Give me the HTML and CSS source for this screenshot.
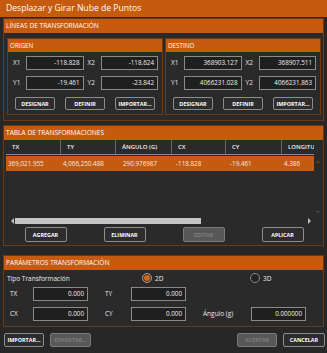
FILE: index.html
```html
<!DOCTYPE html>
<html lang="es">
<head>
    <meta charset="UTF-8">
    <meta name="viewport" content="width=device-width, initial-scale=1.0">
    <title>Desplazar y Girar Nube de Puntos</title>
    <link rel="stylesheet" href="styles.css">
</head>
<body>
    <div class="window">
        <div class="titlebar">Desplazar y Girar Nube de Puntos</div>

        <!-- Lineas de transformacion -->
        <div class="panel lines-panel">
            <div class="panel-head">LÍNEAS DE TRANSFORMACIÓN</div>
            <div class="groups">
                <div class="group">
                    <div class="group-head">ORIGEN</div>
                    <div class="coords">
                        <span class="lbl">X1</span><div class="field">-118.828</div>
                        <span class="lbl lbl2">X2</span><div class="field">-118.624</div>
                        <span class="lbl">Y1</span><div class="field">-19.461</div>
                        <span class="lbl lbl2">Y2</span><div class="field">-23.842</div>
                    </div>
                    <div class="group-buttons">
                        <button class="btn">DESIGNAR</button>
                        <button class="btn">DEFINIR</button>
                        <button class="btn">IMPORTAR...</button>
                    </div>
                </div>
                <div class="group">
                    <div class="group-head">DESTINO</div>
                    <div class="coords">
                        <span class="lbl">X1</span><div class="field">368903.127</div>
                        <span class="lbl lbl2">X2</span><div class="field">368907.511</div>
                        <span class="lbl">Y1</span><div class="field">4066231.028</div>
                        <span class="lbl lbl2">Y2</span><div class="field">4066231.863</div>
                    </div>
                    <div class="group-buttons">
                        <button class="btn">DESIGNAR</button>
                        <button class="btn">DEFINIR</button>
                        <button class="btn">IMPORTAR...</button>
                    </div>
                </div>
            </div>
        </div>

        <!-- Tabla -->
        <div class="panel table-panel">
            <div class="panel-head">TABLA DE TRANSFORMACIONES</div>
            <div class="table-body">
                <div class="grid-wrap">
                    <div class="grid">
                        <div class="grid-row grid-header">
                            <div class="cell">TX</div>
                            <div class="cell">TY</div>
                            <div class="cell">ÁNGULO (G)</div>
                            <div class="cell">CX</div>
                            <div class="cell">CY</div>
                            <div class="cell">LONGITUD</div>
                        </div>
                        <div class="grid-row grid-selected">
                            <div class="cell">369,021.955</div>
                            <div class="cell">4,066,250.488</div>
                            <div class="cell">290.976987</div>
                            <div class="cell">-118.828</div>
                            <div class="cell">-19.461</div>
                            <div class="cell">4.386</div>
                        </div>
                    </div>
                    <div class="vscroll">
                        <span class="arrow arrow-up"></span>
                        <span class="arrow arrow-down"></span>
                    </div>
                </div>
                <div class="hscroll">
                    <span class="arrow arrow-left"></span>
                    <div class="hthumb"></div>
                    <span class="arrow arrow-right"></span>
                </div>
                <div class="table-buttons">
                    <button class="btn btn-tall">AGREGAR</button>
                    <button class="btn btn-tall">ELIMINAR</button>
                    <button class="btn btn-tall" disabled>EDITAR</button>
                    <button class="btn btn-tall">APLICAR</button>
                </div>
            </div>
        </div>

        <!-- Parametros -->
        <div class="panel params-panel">
            <div class="panel-head">PARÁMETROS TRANSFORMACIÓN</div>
            <div class="params-body">
                <div class="tipo-row">
                    <span class="tipo-label">Tipo Transformación</span>
                    <label class="radio radio-on"><span class="dot"></span>2D</label>
                    <label class="radio"><span class="dot"></span>3D</label>
                </div>
                <div class="params-grid">
                    <span class="lbl">TX</span><div class="field">0.000</div>
                    <span class="lbl lbl-gap">TY</span><div class="field">0.000</div>
                    <span></span><span></span>
                    <span class="lbl">CX</span><div class="field">0.000</div>
                    <span class="lbl lbl-gap">CY</span><div class="field">0.000</div>
                    <span class="lbl lbl-gap">Ángulo (g)</span><div class="field">0.000000</div>
                </div>
            </div>
        </div>

        <div class="footer">
            <div class="footer-group">
                <button class="btn">IMPORTAR...</button>
                <button class="btn btn-wide" disabled>EXPORTAR...</button>
            </div>
            <div class="footer-group">
                <button class="btn" disabled>ACEPTAR</button>
                <button class="btn btn-wide2">CANCELAR</button>
            </div>
        </div>
    </div>
</body>
</html>
```

FILE: styles.css
```css
/* General */
body {
    margin: 0;
    font-family: 'Open Sans', 'Noto Sans', sans-serif;
    background-color: #272727;
    color: #ececec;
}

.window {
    width: 327px;
    height: 353px;
    background: #272727;
    overflow: hidden;
}

.titlebar {
    height: 17px;
    line-height: 17px;
    padding-left: 6px;
    background: #c65a0f;
    color: #fff;
    font-size: 8.6px;
}

/* Panels */
.panel {
    margin: 1px 3px 0;
    border: 1px solid #6a3a15;
    background: #2a2a2a;
}

.panel-head {
    height: 14px;
    line-height: 14px;
    padding-left: 2px;
    background: #c65a0f;
    color: #fff;
    font-size: 6.6px;
}

.table-panel {
    margin-top: 4px;
}

.params-panel {
    margin-top: 9px;
}

/* Origen / Destino */
.groups {
    display: flex;
    gap: 2px;
    padding: 5px 2px 5px 3px;
}

.group {
    flex: 1;
    border: 1px solid #6a3a15;
}

.group-head {
    height: 13px;
    line-height: 13px;
    padding-left: 2px;
    background: #c65a0f;
    color: #fff;
    font-size: 6.3px;
}

.coords {
    display: grid;
    grid-template-columns: 13px 1fr 17px 1fr;
    row-gap: 6px;
    padding: 4px 4px 0 5px;
}

.lbl {
    font-size: 6.5px;
    line-height: 14px;
    color: #e6e6e6;
    white-space: nowrap;
}

.lbl2 {
    padding-left: 4px;
}

.field {
    height: 14px;
    box-sizing: border-box;
    border: 1px solid #8a8a8a;
    background: #1f1f1f;
    padding-right: 3px;
    text-align: right;
    font-size: 6.3px;
    line-height: 12px;
    color: #efefef;
}

.group-buttons {
    display: flex;
    justify-content: space-between;
    padding: 7px 7px 4px 7px;
}

/* Buttons */
.btn {
    width: 40px;
    height: 13px;
    padding: 0;
    border: 1px solid #8c8c8c;
    border-radius: 2px;
    background: #2d2d2d;
    color: #fff;
    font-family: 'Open Sans', sans-serif;
    font-size: 5.4px;
    font-weight: bold;
    white-space: nowrap;
    overflow: hidden;
}

.btn:disabled {
    background: #585858;
    border-color: #7a7a7a;
    color: #7d7d7d;
}

.btn-tall {
    width: 42px;
    height: 15px;
}

.btn-wide {
    width: 41px;
}

.btn-wide2 {
    width: 42px;
}

/* Tabla */
.table-body {
    padding: 0 1px 3px 2px;
}

.grid-wrap {
    display: flex;
    height: 76px;
}

.grid {
    flex: 1;
    overflow: hidden;
}

.grid-row {
    display: grid;
    grid-template-columns: 55px 55px 56px 54px 56px 1fr;
    white-space: nowrap;
}

.grid-header {
    height: 14px;
    line-height: 14px;
    border-bottom: 1px solid #8a8a8a;
    font-size: 6px;
    font-weight: 600;
    color: #f4f4f4;
}

.grid-header .cell {
    padding-left: 6px;
    border-right: 1px solid #666;
    overflow: hidden;
}

.grid-header .cell:last-child {
    border-right: none;
}

.grid-selected {
    margin-top: 1px;
    height: 15px;
    line-height: 15px;
    background: #c65a0f;
    font-size: 6.3px;
}

.grid-selected .cell {
    padding-left: 2px;
    overflow: hidden;
}

.grid-selected .cell:nth-child(3) {
    padding-left: 7px;
}

.grid-selected .cell:nth-child(4),
.grid-selected .cell:nth-child(5) {
    padding-left: 4px;
}

.vscroll {
    width: 8px;
    display: flex;
    flex-direction: column;
    justify-content: space-between;
    align-items: center;
    padding: 21px 0 3px;
    box-sizing: border-box;
}

.arrow {
    width: 0;
    height: 0;
    display: block;
}

.arrow-up {
    border-left: 2px solid transparent;
    border-right: 2px solid transparent;
    border-bottom: 2px solid #505050;
}

.arrow-down {
    border-left: 2px solid transparent;
    border-right: 2px solid transparent;
    border-top: 2px solid #505050;
}

.hscroll {
    display: flex;
    align-items: center;
    height: 9px;
    padding-left: 5px;
}

.arrow-left {
    border-top: 3px solid transparent;
    border-bottom: 3px solid transparent;
    border-right: 3px solid #bdbdbd;
    margin-right: 1px;
}

.hthumb {
    width: 186px;
    height: 6px;
    background: #c4c4c4;
}

.arrow-right {
    margin-left: auto;
    margin-right: 11px;
    border-top: 3px solid transparent;
    border-bottom: 3px solid transparent;
    border-left: 3px solid #bdbdbd;
}

.table-buttons {
    display: grid;
    grid-template-columns: repeat(4, 1fr);
    justify-items: center;
    margin-top: 2px;
}

/* Parametros */
.params-body {
    padding: 1px 0 5px 6px;
}

.tipo-row {
    display: flex;
    align-items: center;
    height: 14px;
    margin-left: -3px;
    font-size: 6.5px;
}

.tipo-label {
    flex: none;
    width: 135px;
}

.radio {
    flex: none;
    display: flex;
    align-items: center;
    gap: 3px;
    width: 108px;
}

.radio:last-child {
    width: auto;
}

.dot {
    width: 10px;
    height: 10px;
    box-sizing: border-box;
    border: 1px solid #8a8a8a;
    border-radius: 50%;
    background: #232323;
}

.radio-on .dot {
    background: #d0661a;
    border-color: #9c9c9c;
    box-shadow: inset 0 0 0 1px #3a2a1e;
}

.params-grid {
    display: grid;
    grid-template-columns: 23px 55px 43px 55px 65px 55px;
    row-gap: 6px;
    margin-top: 2px;
}

.lbl-gap {
    padding-left: 17px;
}

/* Footer */
.footer {
    display: flex;
    justify-content: space-between;
    margin-top: 6px;
    padding: 0 2px 0 4px;
}

.footer-group {
    display: flex;
    gap: 6px;
}

.footer .btn {
    height: 14px;
}
```
